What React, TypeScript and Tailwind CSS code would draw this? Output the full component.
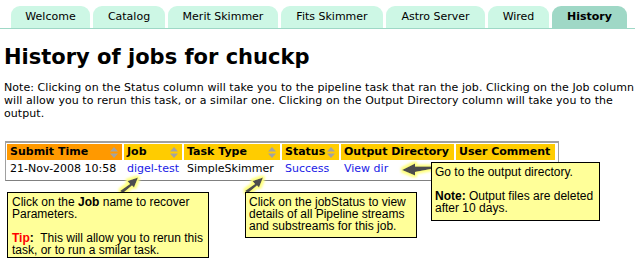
import React from "react";

const tabs = [
  { label: "Welcome", w: "w-[79px]" },
  { label: "Catalog", w: "w-[72px]" },
  { label: "Merit Skimmer", w: "w-[110px]" },
  { label: "Fits Skimmer", w: "w-[102px]" },
  { label: "Astro Server", w: "w-[99px]" },
  { label: "Wired", w: "w-[61px]" },
  { label: "History", w: "w-[75px]", active: true },
];

function SortIcon() {
  return (
    <svg width="8" height="11" viewBox="0 0 8 11" className="shrink-0">
      <polygon points="4,0 8,4.5 0,4.5" fill="#a3a3a3" />
      <polygon points="0,6.5 8,6.5 4,11" fill="#a3a3a3" />
    </svg>
  );
}

const headers = [
  { label: "Submit Time", w: "w-[115px]", sorted: true, icon: true },
  { label: "Job", w: "w-[58px]", icon: true },
  { label: "Task Type", w: "w-[96px]", icon: true },
  { label: "Status", w: "w-[57px]", icon: true },
  { label: "Output Directory", w: "w-[113px]" },
  { label: "User Comment", w: "w-[99px]" },
];

export default function App() {
  return (
    <div className="relative w-[635px] h-[260px] overflow-hidden bg-white text-black font-['DejaVu_Sans',Verdana,sans-serif]">
      {/* tabs */}
      <div className="flex gap-[3px] pl-[11px] pt-[6px] border-b border-[#9ed8c6]">
        {tabs.map(t => (
          <div
            key={t.label}
            className={`${t.w} h-[22px] rounded-t-[9px] flex items-center justify-center text-[11px] ${
              t.active ? "bg-[#9fd8c6] font-bold" : "bg-[#cdf7e5]"
            }`}
          >
            {t.label}
          </div>
        ))}
      </div>

      <h1 className="pl-[4px] mt-[16px] text-[21px] leading-[24px] font-bold">History of jobs for chuckp</h1>

      <p className="pl-[4px] mt-[12px] text-[11px] leading-[13px] tracking-[0.06px]">
        Note: Clicking on the Status column will take you to the pipeline task that ran the job. Clicking on the Job column
        <br />
        will allow you to rerun this task, or a similar one. Clicking on the Output Directory column will take you to the
        <br />
        output.
      </p>

      {/* table */}
      <div className="ml-[5px] mt-[21px] w-[554px] border border-t-2 border-[#a0a0a0] border-b-[#808080] p-[1px] text-[11px]">
        <div className="flex gap-[2px]">
          {headers.map(h => (
            <div
              key={h.label}
              className={`${h.w} h-[16px] flex items-center justify-between pl-[3px] pr-[4px] font-bold ${
                h.sorted ? "bg-[#ff9900]" : "bg-[#ffcc00]"
              }`}
            >
              <span>{h.label}</span>
              {h.icon && <SortIcon />}
            </div>
          ))}
        </div>
        <div className="flex gap-[2px] h-[19px] items-center">
          <div className="w-[115px] pl-[3px]">21-Nov-2008 10:58</div>
          <div className="w-[58px] pl-[3px] text-[#1a1ae6]">digel-test</div>
          <div className="w-[96px] pl-[3px]">SimpleSkimmer</div>
          <div className="w-[57px] pl-[3px] text-[#1a1ae6]">Success</div>
          <div className="w-[113px] pl-[3px] text-[#1a1ae6]">View dir</div>
          <div className="w-[99px]" />
        </div>
      </div>

      {/* arrows */}
      <svg className="absolute left-0 top-0 pointer-events-none" width="635" height="260">
        <defs>
          <filter id="glow" x="-50%" y="-50%" width="200%" height="200%">
            <feMorphology operator="dilate" radius="1.5" in="SourceAlpha" result="d" />
            <feFlood floodColor="#ffff80" />
            <feComposite in2="d" operator="in" result="g" />
            <feGaussianBlur in="g" stdDeviation="0.8" result="gb" />
            <feMerge>
              <feMergeNode in="gb" />
              <feMergeNode in="SourceGraphic" />
            </feMerge>
          </filter>
        </defs>
        <g filter="url(#glow)" fill="#4d4d4d">
          <polygon points="120,191 130,184 127.5,181 138,177.5 134,187.5 132,185.5 123,193" />
          <polygon points="245,191 255,184 252.5,181 263,177.5 259,187.5 257,185.5 248,193" />
          <polygon points="431,166.5 415,166.5 415,163.5 402,170 415,175.5 415,172 431,169" />
        </g>
      </svg>

      {/* callouts */}
      <div className="absolute left-[7px] top-[192px] w-[202px] h-[66px] border border-black bg-[#ffff99] px-[4px] pt-[3px] font-['Liberation_Sans',Arial,sans-serif] text-[12px] leading-[12px] whitespace-nowrap">
        Click on the <b>Job</b> name to recover
        <br />
        Parameters.
        <br />
        <br />
        <b className="text-[#ff0000]">Tip</b>
        <b>:</b>&nbsp; This will allow you to rerun this
        <br />
        task, or to run a smilar task.
      </div>

      <div className="absolute left-[245px] top-[192px] w-[172px] h-[46px] border border-black bg-[#ffff99] px-[3px] pt-[3px] font-['Liberation_Sans',Arial,sans-serif] text-[12px] leading-[12px] whitespace-nowrap">
        Click on the jobStatus to view
        <br />
        details of all Pipeline streams
        <br />
        and substreams for this job.
      </div>

      <div className="absolute left-[431px] top-[162px] w-[169px] h-[59px] border border-black bg-[#ffff99] px-[3px] pt-[3px] font-['Liberation_Sans',Arial,sans-serif] text-[12px] leading-[12px] whitespace-nowrap">
        Go to the output directory.
        <br />
        <br />
        <b>Note:</b> Output files are deleted
        <br />
        after 10 days.
      </div>
    </div>
  );
}
